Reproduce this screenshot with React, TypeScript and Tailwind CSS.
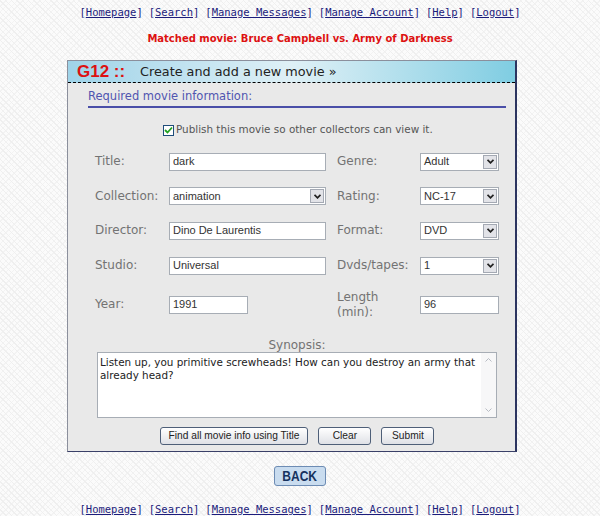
import React from "react";

const links = ["Homepage", "Search", "Manage Messages", "Manage Account", "Help", "Logout"];

const NavBar = () => (
  <div className="flex justify-center gap-[6px] font-['DejaVu_Sans_Mono','Liberation_Mono',monospace] text-[10.5px] leading-[14px] text-[#1c1c7c]">
    {links.map((l) => (
      <span key={l}>
        [<a className="underline">{l}</a>]
      </span>
    ))}
  </div>
);

const TextBox = ({ value, w }: { value: string; w: string }) => (
  <div
    className={`${w} flex h-[18px] items-center border border-[#a7adb5] bg-white pl-[3px] font-['Liberation_Sans',Arial,sans-serif] text-[11px] text-[#333]`}
  >
    {value}
  </div>
);

const Select = ({ value, w }: { value: string; w: string }) => (
  <div
    className={`${w} flex h-[18px] items-center border border-[#a7adb5] bg-white font-['Liberation_Sans',Arial,sans-serif] text-[11px] text-[#333]`}
  >
    <span className="flex-1 pl-[3px]">{value}</span>
    <span className="mr-px flex h-[14px] w-[14px] items-center justify-center border border-[#a4a9b3] bg-[#e2e3e8]">
      <svg width="7" height="5" viewBox="0 0 7 5">
        <path d="M0.5 0.8 L3.5 3.8 L6.5 0.8" fill="none" stroke="#222" strokeWidth="1.8" />
      </svg>
    </span>
  </div>
);

const Label = ({ children, w }: { children: React.ReactNode; w: string }) => (
  <div className={`${w} text-[12px] leading-[15px] text-[#737373]`}>{children}</div>
);

const Btn = ({ children, w }: { children: React.ReactNode; w?: string }) => (
  <button
    className={`${w ?? "px-[8px]"} h-[18px] rounded-[3px] border border-[#4e5f78] bg-linear-to-b from-white to-[#dfe1e6] font-['Liberation_Sans',Arial,sans-serif] text-[10.2px] leading-[16px] text-[#222]`}
  >
    {children}
  </button>
);

export default function App() {
  return (
    <div className="min-h-[516px] bg-[#fbfbfb] bg-[repeating-linear-gradient(45deg,#efefef_0px,#efefef_1px,transparent_1px,transparent_4px),repeating-linear-gradient(-45deg,#f3f3f3_0px,#f3f3f3_1px,transparent_1px,transparent_4px)] pt-[5px] font-['DejaVu_Sans',Verdana,sans-serif]">
      <NavBar />

      <div className="mt-[13px] text-center text-[10px] font-bold leading-[14px] text-[#dd1111]">
        Matched movie: Bruce Campbell vs. Army of Darkness
      </div>

      <div className="ml-[67px] mt-[14px] w-[450px] border border-[#8b8f9c] border-r-2 border-r-[#2c3460] border-b-[#3a4068] bg-[#e9e9e9]">
        <div className="flex h-[22px] items-center border-b border-dashed border-b-black bg-linear-to-r from-[#9fd3e8] via-[#dff0f6] to-[#7fcde2]">
          <span className="ml-[9px] w-[63px] font-['Liberation_Sans',Arial,sans-serif] text-[17px] font-bold text-[#dd1111]">
            G12 ::
          </span>
          <span className="text-[12.8px] text-[#222]">Create and add a new movie »</span>
        </div>

        <div className="ml-[20px] mr-[9px] mt-[6px] border-b-2 border-[#4a4fa8] pb-[3px] text-[11.5px] leading-[14px] text-[#5055b0]">
          Required movie information:
        </div>

        <div className="mt-[15px] flex h-[14px] items-center pl-[95px] text-[10.4px] text-[#555]">
          <span className="mr-[2px] flex h-[11px] w-[11px] items-center justify-center border border-[#1e4d7a] bg-white">
            <svg width="9" height="8" viewBox="0 0 9 8">
              <path d="M1 4 L3.5 6.5 L8 1.5" fill="none" stroke="#21a121" strokeWidth="1.8" />
            </svg>
          </span>
          Publish this movie so other collectors can view it.
        </div>

        <div className="mt-[7px] pl-[27px]">
          <div className="flex h-[35px] items-center">
            <Label w="w-[74px]">Title:</Label>
            <TextBox value="dark" w="w-[157px]" />
            <Label w="ml-[11px] w-[83px]">Genre:</Label>
            <Select value="Adult" w="w-[79px]" />
          </div>
          <div className="flex h-[34px] items-center">
            <Label w="w-[74px]">Collection:</Label>
            <Select value="animation" w="w-[157px]" />
            <Label w="ml-[11px] w-[83px]">Rating:</Label>
            <Select value="NC-17" w="w-[79px]" />
          </div>
          <div className="flex h-[35px] items-center">
            <Label w="w-[74px]">Director:</Label>
            <TextBox value="Dino De Laurentis" w="w-[157px]" />
            <Label w="ml-[11px] w-[83px]">Format:</Label>
            <Select value="DVD" w="w-[79px]" />
          </div>
          <div className="flex h-[35px] items-center">
            <Label w="w-[74px]">Studio:</Label>
            <TextBox value="Universal" w="w-[157px]" />
            <Label w="ml-[11px] w-[83px]">Dvds/tapes:</Label>
            <Select value="1" w="w-[79px]" />
          </div>
          <div className="flex h-[43px] items-center">
            <Label w="w-[74px]">Year:</Label>
            <TextBox value="1991" w="w-[79px]" />
            <Label w="ml-[89px] w-[83px]">
              Length
              <br />
              (min):
            </Label>
            <TextBox value="96" w="w-[79px]" />
          </div>
        </div>

        <div className="ml-[29px] mt-[12px] w-[400px] pb-[6px]">
          <div className="text-center text-[12px] leading-[14px] text-[#737373]">Synopsis:</div>
          <div className="flex h-[66px] border border-[#a7adb5] bg-white">
            <div className="flex-1 px-[2px] pt-[3px] text-[10.4px] leading-[13px] text-[#222]">
              Listen up, you primitive screwheads! How can you destroy an army that already head?
            </div>
            <div className="flex w-[15px] flex-col justify-between bg-[#f7f7f8]">
              <span className="flex h-[14px] items-center justify-center">
                <svg width="7" height="4" viewBox="0 0 7 4">
                  <path d="M0.5 3.5 L3.5 0.5 L6.5 3.5" fill="none" stroke="#b8bcc4" strokeWidth="1" />
                </svg>
              </span>
              <span className="flex h-[14px] items-center justify-center">
                <svg width="7" height="4" viewBox="0 0 7 4">
                  <path d="M0.5 0.5 L3.5 3.5 L6.5 0.5" fill="none" stroke="#b8bcc4" strokeWidth="1" />
                </svg>
              </span>
            </div>
          </div>
          <div className="mt-[9px] flex justify-center gap-[10px]">
            <Btn>Find all movie info using Title</Btn>
            <Btn w="w-[53px]">Clear</Btn>
            <Btn w="w-[53px]">Submit</Btn>
          </div>
        </div>
      </div>

      <div className="mt-[14px] flex justify-center">
        <button className="flex h-[20px] w-[52px] items-center justify-center rounded-[3px] border border-[#6d8cb4] bg-[#c9dcef] font-['Liberation_Sans',Arial,sans-serif] text-[15px] font-bold text-[#16325e]">
          <span className="inline-block scale-x-80">BACK</span>
        </button>
      </div>

      <div className="mt-[16px]">
        <NavBar />
      </div>
    </div>
  );
}
